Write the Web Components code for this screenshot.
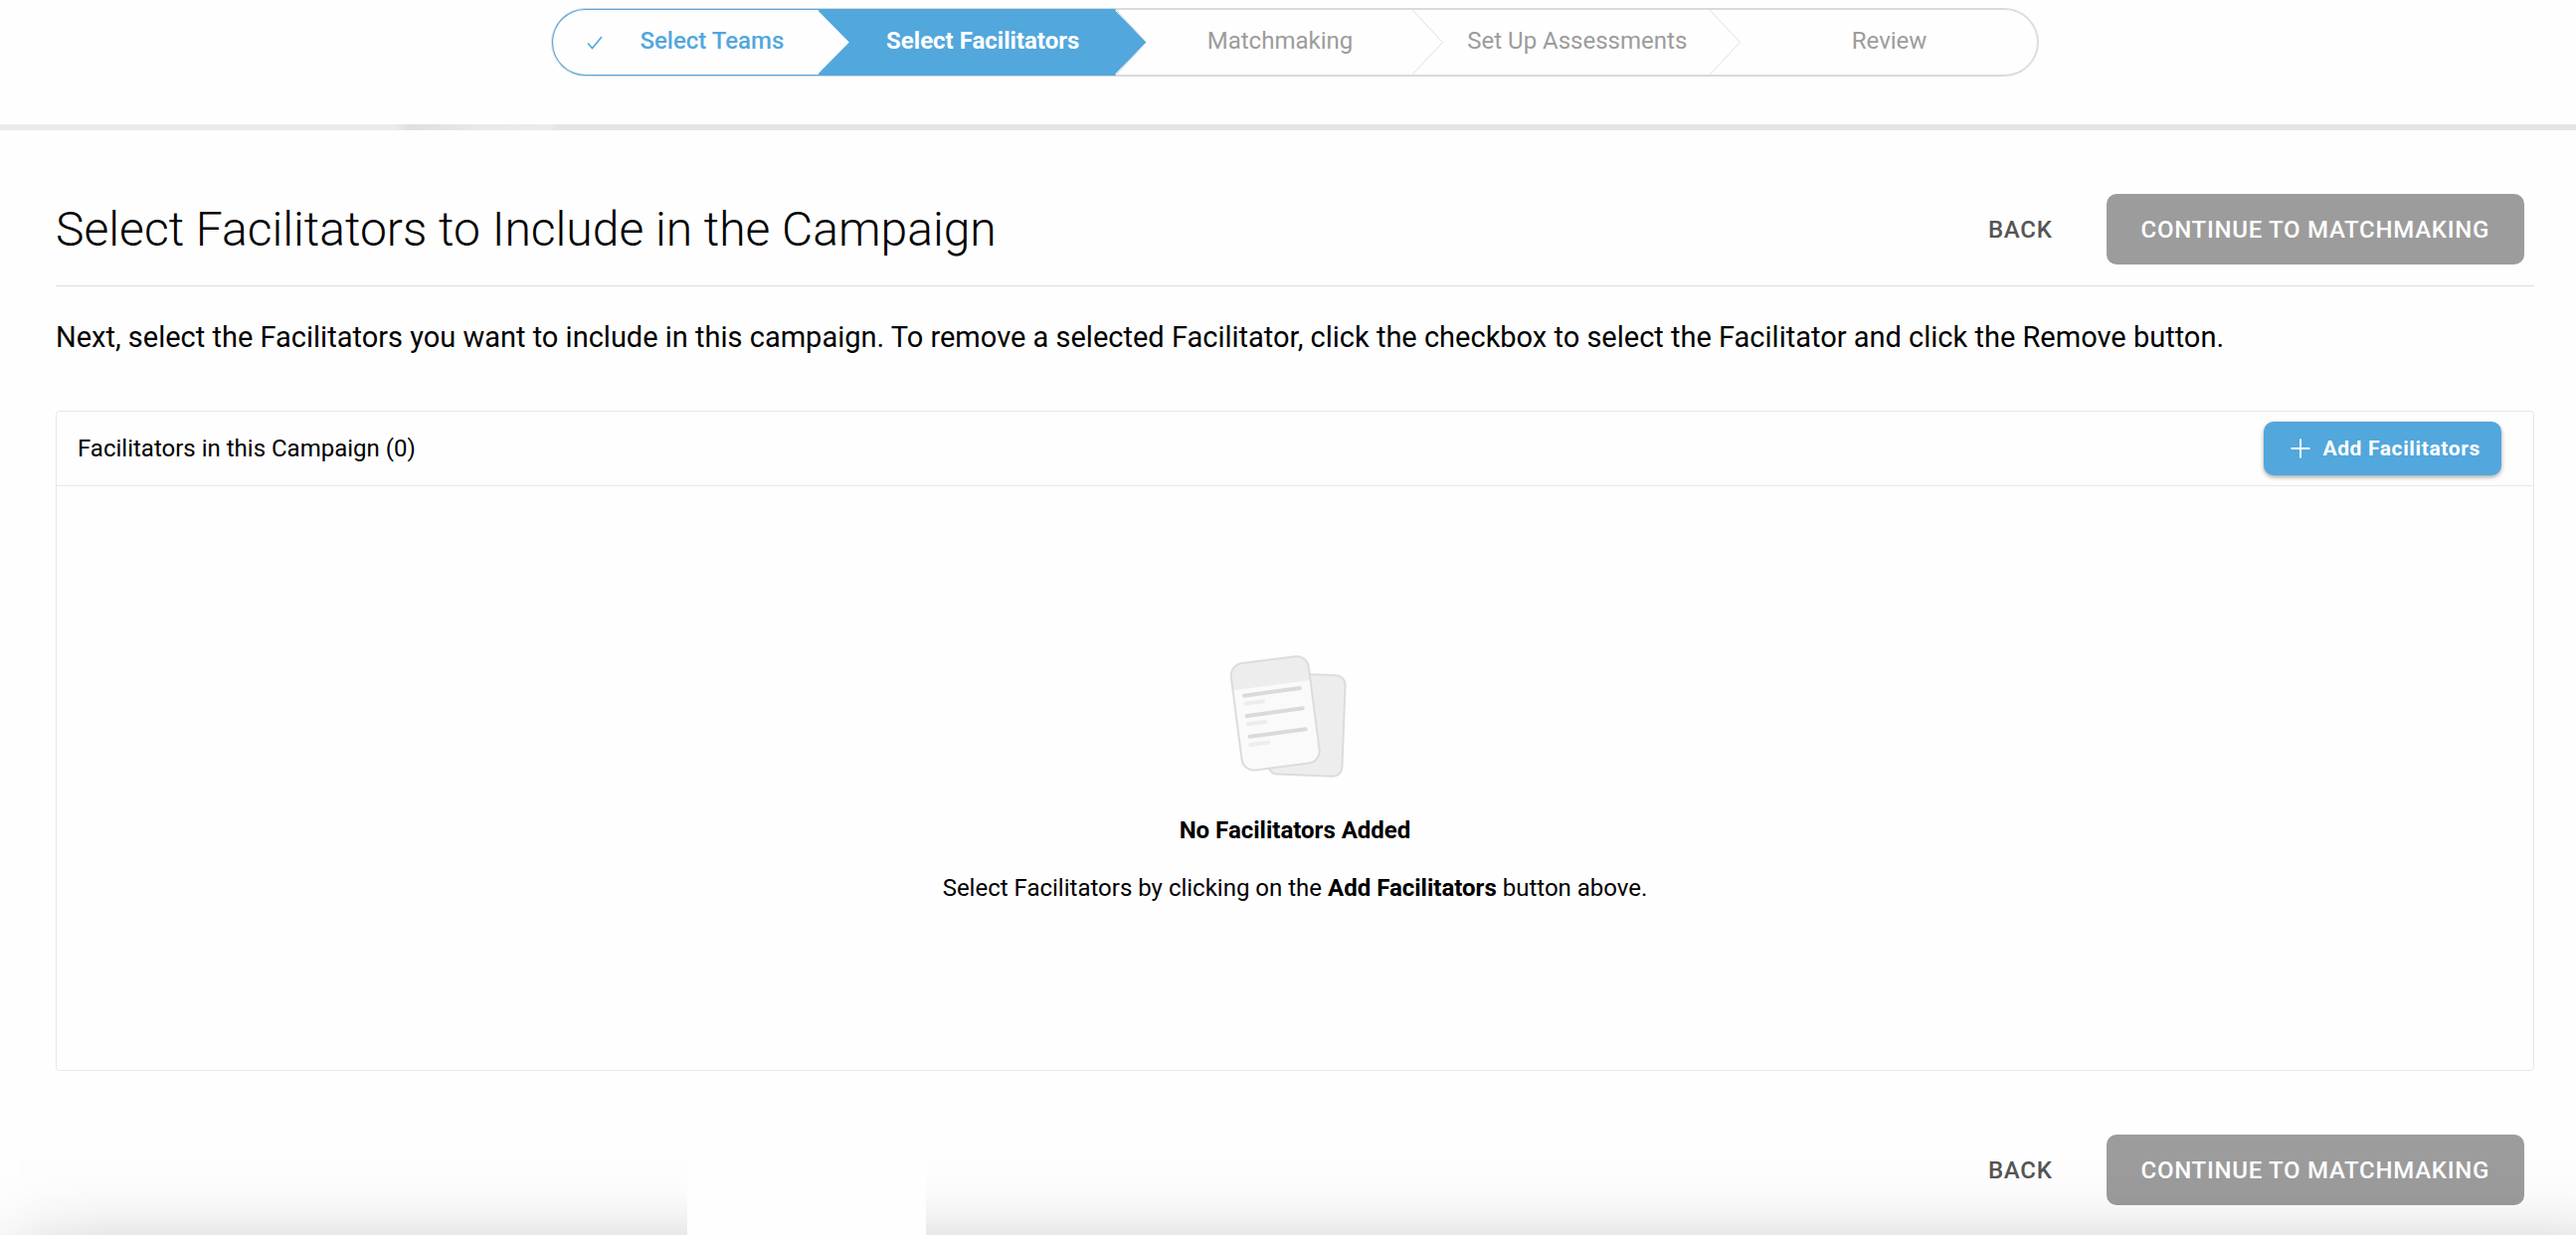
<!DOCTYPE html>
<html lang="en">
<head>
<meta charset="utf-8">
<title>Select Facilitators</title>
<style>
  :root { --blue: #52a7dc; --line: #e8e8e8; --grey: #9c9c9c; }
  body { margin: 0; background: #fefefe; color: #000; font: 400 24px/28px Roboto, "Liberation Sans", sans-serif; }
</style>
</head>
<body>
<campaign-page></campaign-page>
<script>
const define = (name, html) => {
  const template = document.createElement('template');
  template.innerHTML = html;
  customElements.define(name, class extends HTMLElement {
    constructor() {
      super();
      this.attachShadow({ mode: 'open' }).append(template.content.cloneNode(true));
    }
  });
};

define('wizard-step', `
  <style>
    :host { display: flex; position: relative; height: 67px; box-sizing: border-box; padding: 0 30px 4px 0; align-items: center; justify-content: center; color: var(--grey); }
    :host([state=done]) { color: var(--blue); font-weight: 500; }
    :host([state=current]) { color: #fff; font-weight: 700; }
    :host([last]) { padding-right: 0; }
    .check { display: none; width: 16px; height: 14px; margin: 4px 37px 0 0; }
    :host([state=done]) .check { display: block; }
    .arrow { position: absolute; right: 0; top: 0; width: 31px; height: 67px; }
    .arrow path { fill: none; stroke: #dcdfe2; }
    :host([last]) .arrow { display: none; }
    .fill { display: none; position: absolute; z-index: -1; inset: 0 0 0 -31px; background: var(--blue);
      clip-path: polygon(0 0, calc(100% - 31px) 0, calc(100% - 31px) 2px, 100% 50%, calc(100% - 31px) calc(100% - 2px), calc(100% - 31px) 100%, 0 100%, 0 calc(100% - 2px), 31px 50%, 0 2px); }
    .ring { display: none; position: absolute; inset: 0 30px 0 0; border: 1px solid var(--blue); border-right: 0; border-radius: 34px 0 0 34px; }
    :host([state=current]) .fill, :host([state=done]) .ring { display: block; }
    :host([state=current]) .arrow path { stroke: #c9d6df; }
    :host([state=done]) .arrow { display: none; }
  </style>
  <span class="fill"></span><span class="ring"></span>
  <svg class="check" viewBox="0 0 16 14" fill="none" stroke="currentColor" stroke-width="1.6"><path d="M1 7.5 L5.5 12.5 L15 1"/></svg>
  <slot></slot>
  <svg class="arrow" viewBox="0 0 31 67"><path d="M0.5 1.5 L30.5 33.5 L0.5 65.5"/></svg>
`);

define('wizard-steps', `
  <style>
    :host { display: block; padding: 8px 24px 48px 38px; border-bottom: 6px solid #e5e5e5;
      border-image: linear-gradient(90deg, #ebebeb 0, #ebebeb 402px, #dfdfdf 414px, #e9e9e9 490px, #ebebeb 556px, #e5e5e5 562px, #e5e5e5 100%) 6; border-width: 0 0 6px; }
    nav { display: grid; grid-template-columns: repeat(5, 1fr); max-width: 1494px; margin: 0 auto; border: 1px solid #d6dade; border-radius: 35px;
      box-shadow: inset 0 0 0 1px #d6dade; isolation: isolate; }
  </style>
  <nav aria-label="Progress">
    <wizard-step state="done">Select Teams</wizard-step>
    <wizard-step state="current">Select Facilitators</wizard-step>
    <wizard-step>Matchmaking</wizard-step>
    <wizard-step>Set Up Assessments</wizard-step>
    <wizard-step last>Review</wizard-step>
  </nav>
`);

define('wizard-actions', `
  <style>
    :host { display: flex; gap: 22px; padding-right: 10px; }
    button { height: 71px; padding: 0 35px; border: 0; border-radius: 10px; background: none; color: #555; font: 500 24px/28px Roboto, "Liberation Sans", sans-serif; letter-spacing: 0.03em; text-transform: uppercase; white-space: nowrap; }
    .next { background: #9c9c9c; color: #fff; }
    .back { padding: 0 32px; }
  </style>
  <button class="back" type="button">Back</button>
  <button class="next" type="button">Continue to Matchmaking</button>
`);

define('empty-art', `
  <style>
    :host { display: block; }
    svg { display: block; width: 134px; height: 125px; }
  </style>
  <svg viewBox="105 55 402 375" aria-hidden="true" stroke-linecap="round">
    <rect x="230" y="115" width="223" height="305" rx="28" fill="#ededed" stroke="#dcdcdc" stroke-width="6" transform="rotate(2.2 340 267)"/>
    <g transform="translate(246.5 232.5) rotate(-7.4)">
      <rect x="-118" y="-162" width="236" height="325" rx="37" fill="#fafafa"/>
      <path d="M-118 -85 V-125 A37 37 0 0 1 -81 -162 H81 A37 37 0 0 1 118 -125 V-85 Z" fill="#ededed"/>
      <rect x="-118" y="-162" width="236" height="325" rx="37" fill="none" stroke="#dcdcdc" stroke-width="6"/>
    </g>
    <path d="M153 180 L321 157 M161 241 L329 218 M170 303 L338 281" stroke="#dadada" stroke-width="12"/>
    <path d="M156 204 L210 197 M164 266 L218 259 M172 328 L226 321" stroke="#ededed" stroke-width="12"/>
  </svg>
`);

define('facilitator-panel', `
  <style>
    :host { display: block; border: 1px solid var(--line); border-radius: 4px; }
    header { display: flex; align-items: center; justify-content: space-between; height: 74px; padding: 0 32px 0 21px; border-bottom: 1px solid var(--line); }
    h2 { margin: 0; font: inherit; }
    button { display: flex; align-items: center; gap: 12px; height: 54px; padding: 0 21px 0 27px; border: 0; border-radius: 10px; background: var(--blue); color: #fff;
      font: 700 21px/26px Roboto, "Liberation Sans", sans-serif; letter-spacing: 0.03em; box-shadow: 0 2px 4px rgba(0,0,0,.35); white-space: nowrap; }
    svg { width: 20px; height: 20px; }
    .body { display: flex; flex-direction: column; align-items: center; justify-content: center; min-height: 587px; }
    p { margin: 0; text-align: center; }
    .title { margin: 38px 0 30px; font-weight: 700; }
  </style>
  <header>
    <h2>Facilitators in this Campaign (0)</h2>
    <button type="button"><svg viewBox="0 0 20 20" stroke="currentColor" stroke-width="2" aria-hidden="true"><path d="M10 0.5 V19.5 M0.5 10 H19.5"/></svg>Add Facilitators</button>
  </header>
  <div class="body">
    <empty-art></empty-art>
    <p class="title">No Facilitators Added</p>
    <p>Select Facilitators by clicking on the <b>Add Facilitators</b> button above.</p>
  </div>
`);

define('window-shade', `
  <style>
    :host { position: absolute; left: 0; right: 0; bottom: 0; height: 88px; pointer-events: none; }
    .shade { position: absolute; inset: 0; background: linear-gradient(#0000 0, rgba(0,0,0,.004) 30%, rgba(0,0,0,.016) 54%, rgba(0,0,0,.045) 78%, rgba(0,0,0,.085) 100%);
      mask-image: linear-gradient(90deg, rgba(0,0,0,.3) 0, rgba(0,0,0,.75) 45px, #000 110px, #000 calc(100% - 30px), rgba(0,0,0,.85) 100%); }
    .tab { position: absolute; left: 691px; width: 240px; top: 0; bottom: 0; background: #fefefe; }
  </style>
  <div class="shade"></div><div class="tab"></div>
`);

define('campaign-page', `
  <style>
    :host { display: block; position: relative; min-height: 100vh; }
    main { padding: 64px 42px 30px 56px; }
    .top { display: flex; align-items: center; justify-content: space-between; padding-bottom: 21px; border-bottom: 1px solid #dedede; }
    h1 { margin: 0; font-weight: 300; font-size: 48px; line-height: 58px; }
    .intro { margin: 33px 0 56px; font-size: 29px; line-height: 36px; }
    .end { display: flex; justify-content: flex-end; margin-top: 64px; }
  </style>
  <wizard-steps></wizard-steps>
  <main>
    <div class="top">
      <h1>Select Facilitators to Include in the Campaign</h1>
      <wizard-actions></wizard-actions>
    </div>
    <p class="intro">Next, select the Facilitators you want to include in this campaign. To remove a selected Facilitator, click the checkbox to select the Facilitator and click the Remove button.</p>
    <facilitator-panel></facilitator-panel>
    <div class="end"><wizard-actions></wizard-actions></div>
  </main>
  <window-shade></window-shade>
`);
</script>
</body>
</html>
